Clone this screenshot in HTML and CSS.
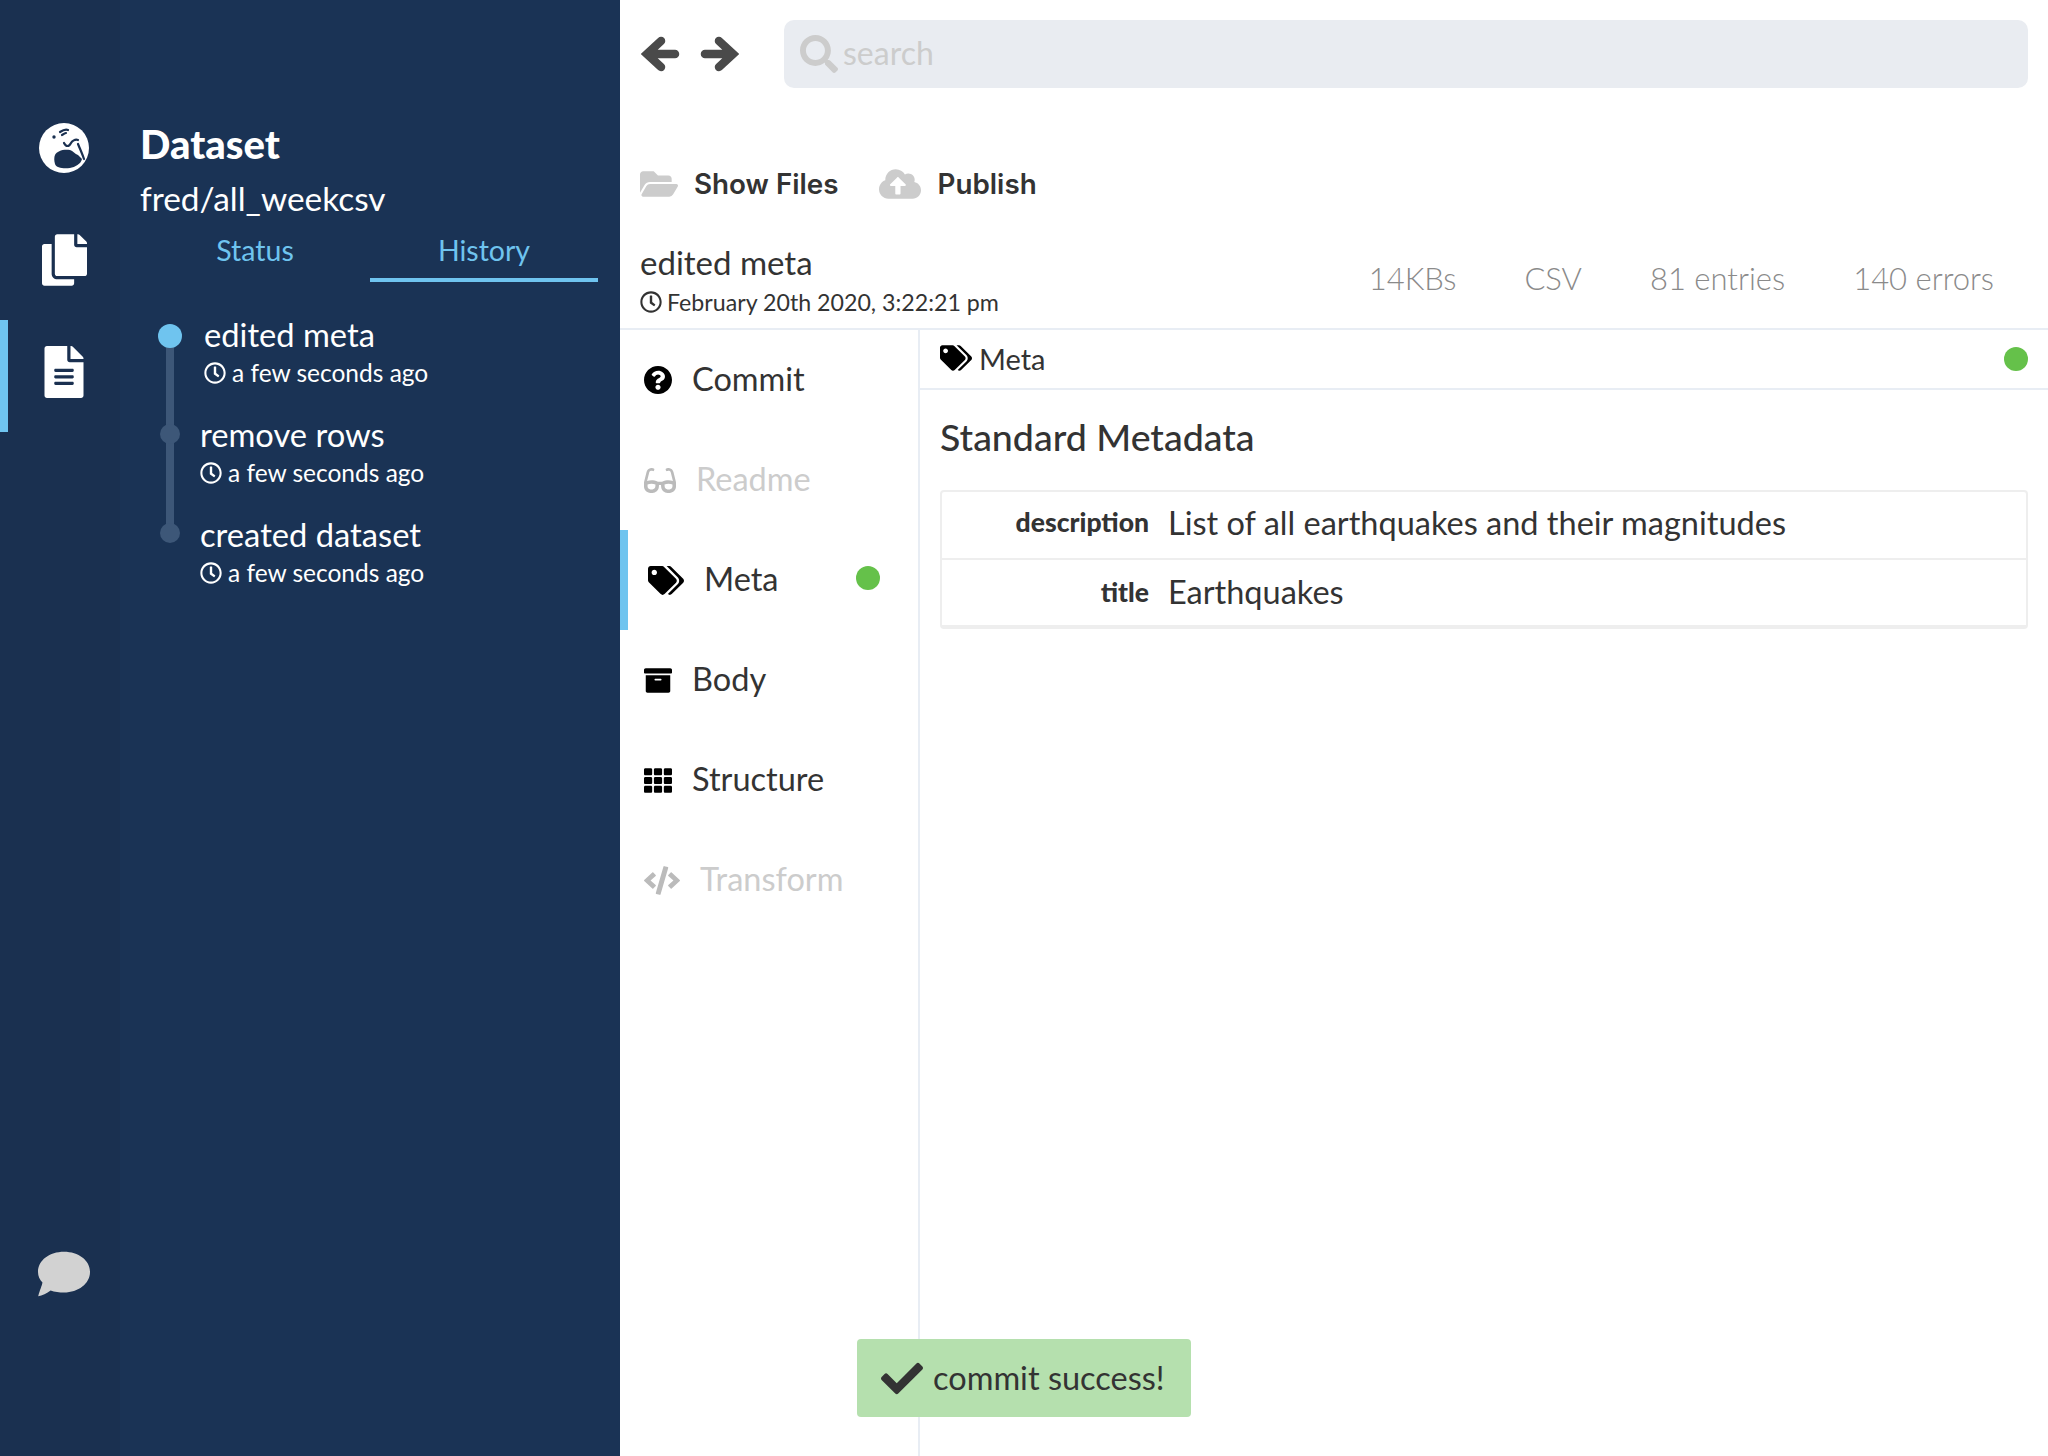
FILE: index.html
```html
<!DOCTYPE html>
<html lang="en">
<head>
  <meta charset="UTF-8">
  <title>Dataset</title>
  <link rel="stylesheet" href="styles.css">
</head>
<body>

  <svg class="sprite" xmlns="http://www.w3.org/2000/svg">
    <symbol id="clock" viewBox="0 0 512 512"><path d="M256 8C119 8 8 119 8 256s111 248 248 248 248-111 248-248S393 8 256 8zm0 448c-110.5 0-200-89.5-200-200S145.5 56 256 56s200 89.5 200 200-89.5 200-200 200zm61.8-104.4l-84.9-61.7c-3.1-2.3-4.9-5.9-4.9-9.7V116c0-6.6 5.4-12 12-12h32c6.6 0 12 5.4 12 12v141.7l66.8 48.6c5.4 3.9 6.5 11.4 2.6 16.8L334.6 349c-3.9 5.3-11.4 6.5-16.8 2.6z"/></symbol>
    <symbol id="tags" viewBox="0 0 640 512"><path d="M497.941 225.941L286.059 14.059A48 48 0 0 0 252.118 0H48C21.49 0 0 21.49 0 48v204.118a48 48 0 0 0 14.059 33.941l211.882 211.882c18.744 18.745 49.136 18.746 67.882 0l204.118-204.118c18.745-18.745 18.745-49.137 0-67.882zM112 160c-26.51 0-48-21.49-48-48s21.49-48 48-48 48 21.49 48 48-21.49 48-48 48zm513.941 133.823L421.823 497.941c-18.745 18.745-49.137 18.745-67.882 0l-.36-.36L527.64 323.522c16.999-16.999 26.36-39.6 26.36-63.64s-9.362-46.641-26.36-63.64L331.397 0h48.721a48 48 0 0 1 33.941 14.059l211.882 211.882c18.745 18.745 18.745 49.137 0 67.882z"/></symbol>
  </svg>

  <div class="app">

    <nav class="rail">
      <a class="rail-item">
        <svg class="rail-globe" viewBox="0 0 50 50">
          <circle cx="25" cy="25" r="25" fill="#fff"/>
          <path fill="#1a3050" d="M16 32C18 28 24 26 31 27C34 28 36 31 39 32L43 36C42 41 36 44 31 45C25 46 17 45 16 41C15 38 15 34 16 32z"/>
          <path fill="none" stroke="#1a3050" stroke-width="2.2" stroke-linecap="round" stroke-linejoin="round" d="M21 9C24 7 27 6 29 7M23 12C25 11 26 10 27 10M25 20C27 24 30 24 32 20C33 18 36 16 39 17M39 21C41 26 43 30 45 36"/>
          <circle cx="15" cy="14" r="1.7" fill="#1a3050"/>
        </svg>
      </a>
      <a class="rail-item">
        <svg class="rail-files" viewBox="0 0 448 512"><path d="M320 448v40c0 13.255-10.745 24-24 24H24c-13.255 0-24-10.745-24-24V120c0-13.255 10.745-24 24-24h72v296c0 30.879 25.121 56 56 56h168zm0-344V0H152c-13.255 0-24 10.745-24 24v368c0 13.255 10.745 24 24 24h272c13.255 0 24-10.745 24-24V128H344c-13.2 0-24-10.8-24-24zm120.971-31.029L375.029 7.029A24 24 0 0 0 358.059 0H352v96h96v-6.059a24 24 0 0 0-7.029-16.97z"/></svg>
      </a>
      <a class="rail-item rail-active">
        <svg class="rail-doc" viewBox="0 0 384 512"><path d="M224 136V0H24C10.7 0 0 10.7 0 24v464c0 13.3 10.7 24 24 24h336c13.3 0 24-10.7 24-24V160H248c-13.2 0-24-10.8-24-24zm64 236c0 6.6-5.4 12-12 12H108c-6.6 0-12-5.4-12-12v-8c0-6.6 5.4-12 12-12h168c6.6 0 12 5.4 12 12v8zm0-64c0 6.6-5.4 12-12 12H108c-6.6 0-12-5.4-12-12v-8c0-6.6 5.4-12 12-12h168c6.6 0 12 5.4 12 12v8zm0-72v8c0 6.6-5.4 12-12 12H108c-6.6 0-12-5.4-12-12v-8c0-6.6 5.4-12 12-12h168c6.6 0 12 5.4 12 12zm96-114.1v6.1H256V0h6.1c6.4 0 12.5 2.5 17 7l97.9 98c4.5 4.5 7 10.6 7 16.9z"/></svg>
      </a>
      <a class="rail-chat">
        <svg viewBox="0 16 512 436"><path d="M256 16C114.6 16 0 100 0 214c0 40 16 76 44 104C38 352 20 388 2 452c38-6 86-26 122-56 40 14 86 20 132 20 141.4 0 256-88 256-202S397.4 16 256 16z"/></svg>
      </a>
    </nav>

    <aside class="sidebar">
      <h1 class="side-title">Dataset</h1>
      <div class="side-name">fred/all_weekcsv</div>
      <div class="tabs">
        <div class="tab">Status</div>
        <div class="tab tab-active">History</div>
      </div>

      <div class="timeline">
        <div class="commit commit-current">
          <span class="commit-dot"></span>
          <div>
            <div class="commit-title">edited meta</div>
            <div class="commit-time"><svg class="clock"><use href="#clock"/></svg>a few seconds ago</div>
          </div>
        </div>
        <div class="commit">
          <span class="commit-dot"></span>
          <div>
            <div class="commit-title">remove rows</div>
            <div class="commit-time"><svg class="clock"><use href="#clock"/></svg>a few seconds ago</div>
          </div>
        </div>
        <div class="commit commit-last">
          <span class="commit-dot"></span>
          <div>
            <div class="commit-title">created dataset</div>
            <div class="commit-time"><svg class="clock"><use href="#clock"/></svg>a few seconds ago</div>
          </div>
        </div>
      </div>
    </aside>

    <main class="main">
      <div class="topbar">
        <svg class="arrow arrow-prev" viewBox="0 0 40 36"><path d="M20 5L6 18L20 31M8 18H34"/></svg>
        <svg class="arrow arrow-next" viewBox="0 0 40 36"><path d="M20 5L34 18L20 31M32 18H6"/></svg>
        <div class="search">
          <svg class="search-icon" viewBox="0 0 512 512"><path d="M505 442.7L405.3 343c-4.5-4.5-10.6-7-17-7H372c27.6-35.3 44-79.7 44-128C416 93.1 322.9 0 208 0S0 93.1 0 208s93.1 208 208 208c48.3 0 92.7-16.4 128-44v16.3c0 6.4 2.5 12.5 7 17l99.7 99.7c9.4 9.4 24.6 9.4 33.9 0l28.3-28.3c9.4-9.4 9.4-24.6.1-34zM208 336c-70.7 0-128-57.2-128-128 0-70.7 57.2-128 128-128 70.7 0 128 57.2 128 128 0 70.7-57.2 128-128 128z"/></svg>
          <span class="search-text">search</span>
        </div>
      </div>

      <div class="toolbar">
        <div class="tool">
          <svg class="tool-folder" viewBox="0 64 576 384"><path d="M572.694 292.093L500.27 416.248A63.997 63.997 0 0 1 444.989 448H45.025c-18.523 0-30.064-20.093-20.731-36.093l72.424-124.155A64 64 0 0 1 152 256h399.964c18.523 0 30.064 20.093 20.73 36.093zM152 224h328v-48c0-26.51-21.49-48-48-48H272l-64-64H48C21.49 64 0 85.49 0 112v278.046l69.077-118.418C86.214 242.25 117.989 224 152 224z"/></svg>
          <span>Show Files</span>
        </div>
        <div class="tool">
          <svg class="tool-cloud" viewBox="0 32 640 448"><path d="M537.6 226.6c4.1-10.7 6.4-22.4 6.4-34.6 0-53-43-96-96-96-19.7 0-38.1 6-53.3 16.2C367 64.2 315.3 32 256 32c-88.4 0-160 71.6-160 160 0 2.7.1 5.4.2 8.1C40.2 219.8 0 273.2 0 336c0 79.5 64.5 144 144 144h368c70.7 0 128-57.3 128-128 0-61.9-44-113.6-102.4-125.4zM393.4 288H328v112c0 8.8-7.2 16-16 16h-48c-8.8 0-16-7.2-16-16V288h-65.4c-14.3 0-21.4-17.2-11.3-27.3l105.4-105.4c6.2-6.2 16.4-6.2 22.6 0l105.4 105.4c10.1 10.1 2.9 27.3-11.3 27.3z"/></svg>
          <span>Publish</span>
        </div>
      </div>

      <div class="head">
        <div>
          <div class="head-title">edited meta</div>
          <div class="head-date"><svg class="clock"><use href="#clock"/></svg>February 20th 2020, 3:22:21 pm</div>
        </div>
        <div class="stats">
          <span>14KBs</span>
          <span>CSV</span>
          <span>81 entries</span>
          <span>140 errors</span>
        </div>
      </div>

      <div class="panes">
        <div class="steps">
          <div class="step">
            <svg class="step-icon icon-commit" viewBox="8 8 496 496"><path d="M504 256c0 136.997-111.043 248-248 248S8 392.997 8 256C8 119.083 119.043 8 256 8s248 111.083 248 248zM262.655 90c-54.497 0-89.255 22.957-116.549 63.758-3.536 5.286-2.353 12.415 2.715 16.258l34.699 26.31c5.205 3.947 12.621 3.008 16.665-2.122 17.864-22.658 30.113-35.797 57.303-35.797 20.429 0 45.698 13.148 45.698 32.958 0 14.976-12.363 22.667-32.534 33.976C247.128 238.528 216 254.941 216 296v4c0 6.627 5.373 12 12 12h56c6.627 0 12-5.373 12-12v-1.333c0-28.462 83.186-29.647 83.186-106.667 0-58.002-60.165-102-116.531-102zM256 338c-25.365 0-46 20.635-46 46 0 25.364 20.635 46 46 46s46-20.636 46-46c0-25.365-20.635-46-46-46z"/></svg>
            <span class="step-label">Commit</span>
          </div>
          <div class="step step-off">
            <svg class="step-icon icon-readme" viewBox="0 32 576 448"><path d="M574.1 280.37L528.75 98.66c-5.91-23.7-21.59-44.05-43-55.81-21.44-11.73-46.97-14.11-70.19-6.33l-15.25 5.08c-8.39 2.79-12.92 11.86-10.12 20.24l5.06 15.18c2.79 8.38 11.85 12.91 20.23 10.12l13.18-4.39c10.87-3.62 23-3.57 33.16 1.73 10.29 5.37 17.57 14.56 20.37 25.82l38.46 153.82c-22.19-6.81-49.79-12.46-81.2-12.46-34.77 0-73.98 7.02-114.85 26.74h-73.18c-40.87-19.74-80.08-26.75-114.86-26.75-31.42 0-59.02 5.65-81.21 12.46l38.46-153.83c2.79-11.25 10.09-20.45 20.38-25.81 10.16-5.3 22.28-5.35 33.15-1.73l13.17 4.39c8.38 2.79 17.44-1.74 20.23-10.12l5.06-15.18c2.8-8.38-1.73-17.45-10.12-20.24l-15.25-5.08c-23.22-7.78-48.75-5.41-70.19 6.33-21.41 11.77-37.09 32.11-43 55.8L1.9 280.37A64.218 64.218 0 0 0 0 295.86v70.25C0 429.01 51.58 480 115.2 480h37.12c60.28 0 110.37-45.94 114.88-105.37l2.93-38.63h35.75l2.93 38.63C313.31 434.06 363.4 480 423.68 480h37.12c63.62 0 115.2-50.99 115.2-113.88v-70.25c0-5.23-.64-10.43-1.9-15.5zm-370.72 89.42c-1.97 25.91-24.4 46.21-51.06 46.21H115.2C86.97 416 64 393.62 64 366.11v-37.54c18.12-6.49 43.42-12.57 72.79-12.57 23.86 0 47.26 4.33 69.93 12.92l-3.35 41.87zM512 366.12c0 27.51-22.97 49.88-51.2 49.88h-37.12c-26.67 0-49.1-20.3-51.06-46.21l-3.33-41.88c22.67-8.59 46.08-12.92 69.92-12.92 29.37 0 54.67 6.08 72.79 12.57v37.56z"/></svg>
            <span class="step-label">Readme</span>
          </div>
          <div class="step step-active">
            <svg class="step-icon icon-tags"><use href="#tags"/></svg>
            <span class="step-label">Meta</span>
            <span class="ok-dot step-dot"></span>
          </div>
          <div class="step">
            <svg class="step-icon icon-body" viewBox="0 32 512 448"><path d="M32 448c0 17.7 14.3 32 32 32h384c17.7 0 32-14.3 32-32V160H32v288zm160-212c0-6.6 5.4-12 12-12h104c6.6 0 12 5.4 12 12v8c0 6.6-5.4 12-12 12H204c-6.6 0-12-5.4-12-12v-8zM480 32H32C14.3 32 0 46.3 0 64v48c0 8.8 7.2 16 16 16h480c8.8 0 16-7.2 16-16V64c0-17.7-14.3-32-32-32z"/></svg>
            <span class="step-label">Body</span>
          </div>
          <div class="step">
            <svg class="step-icon icon-body" viewBox="0 32 512 448"><path d="M149.333 56v80c0 13.255-10.745 24-24 24H24c-13.255 0-24-10.745-24-24V56c0-13.255 10.745-24 24-24h101.333c13.255 0 24 10.745 24 24zm181.334 240v-80c0-13.255-10.745-24-24-24H205.333c-13.255 0-24 10.745-24 24v80c0 13.255 10.745 24 24 24h101.333c13.256 0 24.001-10.745 24.001-24zm32-240v80c0 13.255 10.745 24 24 24H488c13.255 0 24-10.745 24-24V56c0-13.255-10.745-24-24-24H387.333c-13.255 0-24 10.745-24 24zm-32 80V56c0-13.255-10.745-24-24-24H205.333c-13.255 0-24 10.745-24 24v80c0 13.255 10.745 24 24 24h101.333c13.256 0 24.001-10.745 24.001-24zm-205.334 56H24c-13.255 0-24 10.745-24 24v80c0 13.255 10.745 24 24 24h101.333c13.255 0 24-10.745 24-24v-80c0-13.255-10.745-24-24-24zM0 376v80c0 13.255 10.745 24 24 24h101.333c13.255 0 24-10.745 24-24v-80c0-13.255-10.745-24-24-24H24c-13.255 0-24 10.745-24 24zm386.667-56H488c13.255 0 24-10.745 24-24v-80c0-13.255-10.745-24-24-24H386.667c-13.255 0-24 10.745-24 24v80c0 13.255 10.745 24 24 24zm0 160H488c13.255 0 24-10.745 24-24v-80c0-13.255-10.745-24-24-24H386.667c-13.255 0-24 10.745-24 24v80c0 13.255 10.745 24 24 24zM181.333 376v80c0 13.255 10.745 24 24 24h101.333c13.255 0 24-10.745 24-24v-80c0-13.255-10.745-24-24-24H205.333c-13.255 0-24 10.745-24 24z"/></svg>
            <span class="step-label">Structure</span>
          </div>
          <div class="step step-off">
            <svg class="step-icon icon-code" viewBox="0 0 640 512"><path d="M278.9 511.5l-61-17.7c-6.4-1.8-10-8.5-8.2-14.9L346.2 8.7c1.8-6.4 8.5-10 14.9-8.2l61 17.7c6.4 1.8 10 8.5 8.2 14.9L293.8 503.3c-1.9 6.4-8.5 10.1-14.9 8.2zm-114-112.2l43.5-46.4c4.6-4.9 4.3-12.7-.8-17.2L117 256l90.6-79.7c5.1-4.5 5.5-12.3.8-17.2l-43.5-46.4c-4.5-4.8-12.1-5.1-17-.5L3.8 247.2c-5.1 4.7-5.1 12.8 0 17.5l144.1 135.1c4.9 4.6 12.5 4.4 17-.5zm327.2.6l144.1-135.1c5.1-4.7 5.1-12.8 0-17.5L492.1 112.1c-4.8-4.5-12.4-4.3-17 .5L431.6 159c-4.6 4.9-4.3 12.7.8 17.2L523 256l-90.6 79.7c-5.1 4.5-5.5 12.3-.8 17.2l43.5 46.4c4.5 4.9 12.1 5.1 17 .6z"/></svg>
            <span class="step-label">Transform</span>
          </div>
        </div>

        <div class="content">
          <div class="content-head">
            <svg class="content-tags"><use href="#tags"/></svg>
            <span>Meta</span>
            <span class="ok-dot content-dot"></span>
          </div>
          <h2 class="section-title">Standard Metadata</h2>
          <div class="meta-table">
            <div class="meta-row">
              <div class="meta-key">description</div>
              <div class="meta-value">List of all earthquakes and their magnitudes</div>
            </div>
            <div class="meta-row">
              <div class="meta-key">title</div>
              <div class="meta-value">Earthquakes</div>
            </div>
          </div>
        </div>
      </div>

      <div class="toast">
        <svg class="toast-check" viewBox="0 64 512 384"><path d="M173.898 439.404l-166.4-166.4c-9.997-9.997-9.997-26.206 0-36.204l36.203-36.204c9.997-9.998 26.207-9.998 36.204 0L192 312.69 432.095 72.596c9.997-9.997 26.207-9.997 36.204 0l36.203 36.204c9.997 9.997 9.997 26.206 0 36.204l-294.4 294.401c-9.998 9.997-26.207 9.997-36.204-.001z"/></svg>
        <span class="toast-text">commit success!</span>
      </div>
    </main>
  </div>

</body>
</html>
```

FILE: styles.css
```css
* {
  box-sizing: border-box;
}
body {
  margin: 0;
  font-family: Lato, "Open Sans", sans-serif;
  color: #333;
  background: white;
}
.sprite {
  display: none;
}
.app {
  display: flex;
  height: 1456px;
  overflow: hidden;
}

/* far left icon rail */
.rail {
  width: 120px;
  flex: none;
  display: flex;
  flex-direction: column;
  padding-top: 92px;
  padding-bottom: 159px;
  background: #1a3050;
  fill: white;
}
.rail-item {
  height: 112px;
  padding-left: 8px;
  display: flex;
  align-items: center;
  justify-content: center;
}
.rail-active {
  margin-top: 4px;
  padding-bottom: 8px;
  box-shadow: inset 8px 0 0 #6fc4ef;
}
.rail-globe {
  width: 50px;
  height: 50px;
}
.rail-files {
  width: 45px;
  height: 52px;
}
.rail-doc {
  width: 40px;
  height: 52px;
}
.rail-chat {
  margin-top: auto;
  padding-left: 8px;
  display: flex;
  justify-content: center;
  fill: #d2d2d2;
}
.rail-chat svg {
  width: 52px;
  height: 46px;
}

/* dataset sidebar */
.sidebar {
  width: 500px;
  flex: none;
  padding: 124px 22px 0 20px;
  background: #1a3355;
  color: white;
}
.side-title {
  margin: 0;
  font-size: 40px;
  line-height: 40px;
  font-weight: 900;
}
.side-name {
  margin-top: 14px;
  font-size: 33.4px;
  line-height: 40px;
  font-weight: 400;
}
.tabs {
  display: flex;
}
.tab {
  width: 230px;
  padding: 12px 0 8px;
  border-bottom: 4px solid transparent;
  text-align: center;
  font-size: 28.5px;
  line-height: 40px;
  color: #6fc4ef;
}
.tab-active {
  width: 228px;
  border-bottom-color: #6fc4ef;
}
.timeline {
  position: relative;
  margin-top: 34px;
}
.timeline::before {
  content: "";
  position: absolute;
  left: 26px;
  top: 20px;
  width: 8px;
  height: 198px;
  background: #3d5778;
}
.commit {
  position: relative;
  display: flex;
  height: 100px;
}
.commit-dot {
  flex: none;
  width: 20px;
  height: 20px;
  margin: 8px 20px 0 20px;
  border-radius: 50%;
  background: #3d5778;
}
.commit-current .commit-dot {
  width: 24px;
  height: 24px;
  margin: 8px 22px 0 18px;
  background: #6fc4ef;
}
.commit-last .commit-dot {
  margin-top: 7px;
}
.commit-title {
  margin-top: -1px;
  font-size: 32.7px;
  line-height: 40px;
}
.commit-time {
  display: flex;
  align-items: center;
  margin-top: 3px;
  font-size: 24.5px;
  line-height: 30px;
  fill: white;
}
.clock {
  width: 22px;
  height: 22px;
  margin-right: 6px;
  flex: none;
}

/* main area */
.main {
  position: relative;
  flex: 1;
  display: flex;
  flex-direction: column;
  min-width: 0;
}
.topbar {
  display: flex;
  align-items: center;
  height: 68px;
  margin: 20px 20px 0;
}
.arrow {
  width: 40px;
  height: 36px;
  fill: none;
  stroke: #4a4a4a;
  stroke-width: 8.5;
  stroke-linecap: round;
}
.arrow-prev {
  margin-left: 1px;
}
.arrow-next {
  margin-left: 18px;
}
.search {
  flex: 1;
  height: 68px;
  margin-left: 45px;
  padding-left: 16px;
  display: flex;
  align-items: center;
  border-radius: 10px;
  background: #e9ecf1;
  color: #ccc;
  font-size: 32px;
  fill: #ccc;
}
.search-icon {
  width: 38px;
  height: 38px;
  margin-right: 5px;
}
.search-text {
  padding-bottom: 3px;
}
.toolbar {
  display: flex;
  align-items: center;
  height: 60px;
  margin: 66px 20px 0;
  font-family: Inter, sans-serif;
  font-weight: 600;
  font-size: 27.8px;
  color: #333;
}
.tool {
  display: flex;
  align-items: center;
  margin-right: 40px;
  fill: #ccc;
}
.tool-folder {
  width: 38px;
  height: 26px;
  margin-right: 16px;
}
.tool-cloud {
  width: 42px;
  height: 30px;
  margin-right: 17px;
}
.head {
  display: flex;
  justify-content: space-between;
  align-items: flex-start;
  height: 116px;
  padding: 28px 54px 0 20px;
  border-bottom: 2px solid #e8edf4;
}
.head-title {
  font-size: 33px;
  line-height: 40px;
}
.head-date {
  display: flex;
  align-items: center;
  margin-top: 5px;
  font-size: 23.2px;
  line-height: 30px;
  fill: #333;
}
.head-date .clock {
  margin-right: 5px;
}
.stats {
  display: flex;
  gap: 68px;
  margin-top: 16px;
  font-size: 31px;
  line-height: 40px;
  font-weight: 300;
  color: #8a8a8a;
}

/* step list and content */
.panes {
  flex: 1;
  display: flex;
}
.steps {
  width: 300px;
  flex: none;
  border-right: 2px solid #e8edf4;
}
.step {
  display: flex;
  align-items: center;
  gap: 20px;
  height: 100px;
  padding-left: 24px;
  font-size: 32.5px;
  fill: black;
}
.step-label {
  padding-bottom: 4px;
}
.step-off {
  color: #ccc;
  fill: #bbb;
}
.step-active {
  padding-left: 20px;
  border-left: 8px solid #6fc4ef;
}
.step-icon {
  flex: none;
}
.icon-commit {
  width: 28px;
  height: 28px;
}
.icon-readme {
  width: 32px;
  height: 25px;
}
.icon-tags {
  width: 36px;
  height: 29px;
}
.icon-body {
  width: 28px;
  height: 25px;
}
.icon-code {
  width: 36px;
  height: 29px;
}
.ok-dot {
  width: 24px;
  height: 24px;
  border-radius: 50%;
  background: #65c14a;
}
.step-dot {
  margin: -4px 38px 0 auto;
}
.content {
  flex: 1;
  min-width: 0;
}
.content-head {
  display: flex;
  align-items: center;
  height: 60px;
  padding: 0 20px 2px;
  border-bottom: 2px solid #e8edf4;
  font-size: 29px;
}
.content-tags {
  width: 32px;
  height: 26px;
  margin-right: 7px;
}
.content-dot {
  margin: 2px 0 0 auto;
}
.section-title {
  margin: 25px 20px 31px;
  font-size: 37.5px;
  line-height: 44px;
  font-weight: 500;
}
.meta-table {
  margin: 0 20px;
  border: 2px solid #eee;
  border-bottom-width: 4px;
  border-radius: 4px;
}
.meta-row {
  display: flex;
  align-items: center;
  height: 65px;
  padding-bottom: 2px;
}
.meta-row:first-child {
  height: 68px;
  padding-bottom: 6px;
  border-bottom: 2px solid #eee;
}
.meta-key {
  width: 207px;
  flex: none;
  text-align: right;
  font-size: 26.5px;
  font-weight: 900;
}
.meta-value {
  padding-left: 19px;
  font-size: 32.5px;
}

.toast {
  position: absolute;
  left: 237px;
  top: 1339px;
  width: 334px;
  height: 78px;
  padding-left: 24px;
  display: flex;
  align-items: center;
  border-radius: 4px;
  background: #b5e0ae;
  font-size: 32.5px;
  fill: #333;
}
.toast-check {
  width: 42px;
  height: 33px;
  margin-right: 10px;
}
.toast-text {
  padding-bottom: 2px;
}
```
